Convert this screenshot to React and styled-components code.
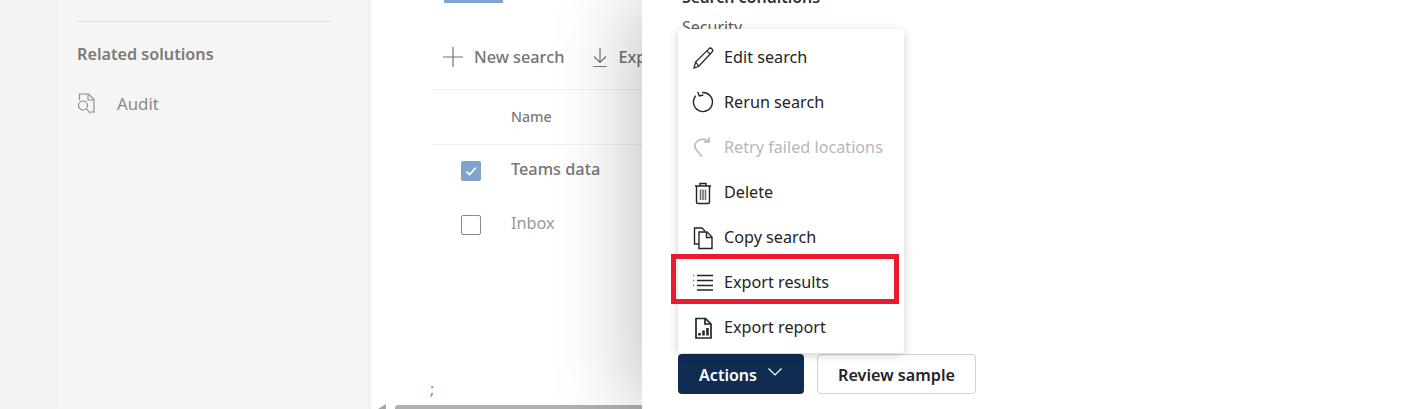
import styled, { createGlobalStyle } from 'styled-components';

const GlobalStyle = createGlobalStyle`
	html, body {
		margin: 0;
		padding: 0;
		background: #ffffff;
	}
	body {
		font-family: 'Noto Sans', 'Open Sans', 'Liberation Sans', sans-serif;
	}
`;

const menuItems = [
	{ label: 'Edit search', icon: 'edit' },
	{ label: 'Rerun search', icon: 'rerun' },
	{ label: 'Retry failed locations', icon: 'retry', disabled: true },
	{ label: 'Delete', icon: 'delete' },
	{ label: 'Copy search', icon: 'copy' },
	{ label: 'Export results', icon: 'list', marked: true },
	{ label: 'Export report', icon: 'report' },
];

const Icon = ({ name }) => {
	const common = { width: 24, height: 24, viewBox: '0 0 24 24', fill: 'none', stroke: 'currentColor', strokeWidth: 1.2 };
	switch (name) {
		case 'edit':
			return (
				<svg {...common}>
					<path d="M3 22l1.600-6L17.800 2.800a2.200 2.200 0 0 1 3.200 3.200L7.800 20.200z" />
					<path d="M15.800 4.800l3.400 3.400M4.600 16l3.200 4.200" />
				</svg>
			);
		case 'rerun':
			return (
				<svg {...common} strokeWidth={1.4}>
					<path d="M11 1.600A9.500 9.500 0 1 1 4.800 4.800" />
					<path d="M6.800 1l1.500 4 4-1" />
				</svg>
			);
		case 'retry':
			return (
				<svg {...common} strokeWidth={1.5}>
					<path d="M17.500 5.500C14.500 2.500 9 2.500 6 5.500C3 8.500 3.500 11.500 5.500 14l5.500 6.500" />
					<path d="M18 1v5h-5" />
				</svg>
			);
		case 'delete':
			return (
				<svg {...common} strokeWidth={1.4}>
					<path d="M4 5h16M9 5V2.500h6V5M5.500 5v16a1.500 1.500 0 0 0 1.500 1.500h10a1.500 1.500 0 0 0 1.500-1.500V5" />
					<path d="M9.500 8.500v10.500M12 8.500v10.500M14.500 8.500v10.500" strokeWidth={1.600} stroke="#6e6e6e" />
				</svg>
			);
		case 'copy':
			return (
				<svg {...common} strokeWidth={1.4}>
					<path d="M8 18H3.500V2H11l3 3" />
					<path d="M8 6h8l5 5v11.500H8z" />
					<path d="M15.500 6v5.500H21" />
				</svg>
			);
		case 'list':
			return (
				<svg {...common} strokeWidth={1.300}>
					<path d="M6 4.500h16M6 9.500h16M6 14.500h16M6 19h16" />
					<path d="M2 4.500h1.300M2 9.500h1.300M2 14.500h1.300" stroke="#777777" />
				</svg>
			);
		case 'report':
			return (
				<svg {...common} strokeWidth={1.700}>
					<path d="M5 2.500h9.500L20 8v14H5z" />
					<path d="M14 2.500V8h5.500" />
					<path d="M8.500 19.500v-2.500M12.500 19.500v-5M16.500 19.500v-7.500" strokeWidth={2.500} />
				</svg>
			);
		default:
			return null;
	}
};

const AuditIcon = () => (
	<svg width="20" height="24" viewBox="0 0 20 24" fill="none" stroke="currentColor" strokeWidth="1.100">
		<path d="M2.500 8V2h9l5.500 5.500V20h-3.500" />
		<path d="M11 2.500V8h6" />
		<circle cx="6" cy="13.500" r="4.500" />
		<path d="M9.500 17l4 4.500" />
	</svg>
);

const App = () => {
	return (
		<>
			<GlobalStyle />
			<Page>
				<Gutter />
				<Sidebar>
					<Divider />
					<SideTitle>Related solutions</SideTitle>
					<SideLink>
						<AuditIcon />
						<span>Audit</span>
					</SideLink>
				</Sidebar>
				<Main>
					<TabMark />
					<CommandBar>
						<CommandButton>
							<svg width="22" height="22" viewBox="0 0 22 22" fill="none" stroke="currentColor" strokeWidth="1.200">
								<path d="M11 1v20M1 11h20" />
							</svg>
							New search
						</CommandButton>
						<CommandButton>
							<svg width="16" height="22" viewBox="0 0 16 22" fill="none" stroke="currentColor" strokeWidth="1.200">
								<path d="M8 2v14M2 10.500l6 6 6-6M1.500 20.500h13" />
							</svg>
							Export
						</CommandButton>
					</CommandBar>
					<HeaderRow>
						<HeaderCell>Name</HeaderCell>
					</HeaderRow>
					<Row>
						<Check $checked>
							<svg width="14" height="14" viewBox="0 0 12 12" fill="none" stroke="#ffffff" strokeWidth="1.500">
								<path d="M2 6.500l2.800 2.500L10 3.200" />
							</svg>
						</Check>
						<RowName $strong>Teams data</RowName>
					</Row>
					<Row>
						<Check />
						<RowName>Inbox</RowName>
					</Row>
					<Semicolon>;</Semicolon>
					<ScrollTrack>
						<ScrollArrow />
						<ScrollThumb />
					</ScrollTrack>
				</Main>
				<Panel>
					<PanelHeading>Search conditions</PanelHeading>
					<PanelText>Security</PanelText>
					<Actions>
						<PrimaryButton>
							Actions
							<svg width="16" height="10" viewBox="0 0 16 10" fill="none" stroke="#ffffff" strokeWidth="1.200">
								<path d="M1.500 1.500L8 8l6.500-6.500" />
							</svg>
						</PrimaryButton>
						<SecondaryButton>Review sample</SecondaryButton>
						<Menu>
							{menuItems.map((item) => (
								<MenuItem key={item.label} $disabled={item.disabled}>
									<Icon name={item.icon} />
									<MenuLabel>{item.label}</MenuLabel>
									{item.marked && <Highlight />}
								</MenuItem>
							))}
						</Menu>
					</Actions>
				</Panel>
			</Page>
		</>
	);
};

const Page = styled.div`
	display: flex;
	width: 1421px;
	height: 409px;
	overflow: hidden;
`;

const Gutter = styled.div`
	width: 58px;
	flex: none;
	background: #f3f3f3;
`;

const Sidebar = styled.div`
	width: 313px;
	flex: none;
	box-sizing: border-box;
	padding: 21px 40px 0 19px;
	background: #f5f5f5;
	box-shadow: inset -4px 0 4px -3px #ececec;
`;

const Divider = styled.div`
	height: 1px;
	width: 254px;
	background: #dcdcdc;
`;

const SideTitle = styled.div`
	margin-top: 20px;
	font-size: 16.2px;
	line-height: 24px;
	font-weight: 600;
	color: #7b7a79;
`;

const SideLink = styled.div`
	display: flex;
	align-items: center;
	gap: 20px;
	margin-top: 26px;
	font-size: 16.8px;
	line-height: 24px;
	color: #8a8988;
`;

const Main = styled.div`
	position: relative;
	width: 271px;
	flex: none;
	box-sizing: border-box;
	padding-left: 61px;
	background: #ffffff;
	overflow: hidden;
`;

const TabMark = styled.div`
	position: absolute;
	left: 73px;
	top: 0;
	width: 59px;
	height: 3px;
	background: #7fa3cc;
`;

const CommandBar = styled.div`
	display: flex;
	align-items: center;
	gap: 28px;
	height: 90px;
	box-sizing: border-box;
	padding: 24px 0 0 10px;
	border-bottom: 1px solid #eeeeee;
	white-space: nowrap;
`;

const CommandButton = styled.div`
	display: flex;
	align-items: center;
	gap: 10px;
	font-size: 16.3px;
	font-weight: 500;
	color: #767574;
`;

const HeaderRow = styled.div`
	display: flex;
	align-items: center;
	height: 54px;
	padding-left: 79px;
	border-bottom: 1px solid #f0f0f0;
`;

const HeaderCell = styled.div`
	margin-bottom: 2px;
	font-size: 14.2px;
	font-weight: 500;
	color: #7b7a79;
`;

const Row = styled.div`
	display: flex;
	align-items: center;
	gap: 30px;
	height: 54px;
	padding-left: 29px;
`;

const Check = styled.div`
	display: flex;
	align-items: center;
	justify-content: center;
	width: 20px;
	height: 20px;
	margin-bottom: 2px;
	box-sizing: border-box;
	border-radius: 2px;
	background: ${(p) => (p.$checked ? '#7fa3cc' : '#ffffff')};
	border: 1px solid ${(p) => (p.$checked ? '#7fa3cc' : '#8a8a8a')};
`;

const RowName = styled.div`
	margin-bottom: 6px;
	font-size: 16.3px;
	font-weight: ${(p) => (p.$strong ? 500 : 400)};
	color: ${(p) => (p.$strong ? '#767574' : '#98979a')};
`;

const Semicolon = styled.div`
	position: absolute;
	left: 59px;
	top: 378px;
	font-size: 16px;
	color: #8a8988;
`;

const ScrollTrack = styled.div`
	position: absolute;
	left: 7px;
	right: 0;
	bottom: 0;
	display: flex;
	align-items: flex-end;
	gap: 9px;
	height: 4px;
`;

const ScrollArrow = styled.div`
	width: 0;
	height: 0;
	border-style: solid;
	border-width: 0 0 5px 8px;
	border-color: transparent transparent #a8a8a8 transparent;
`;

const ScrollThumb = styled.div`
	flex: 1;
	height: 4px;
	background: #b0b0b0;
	border-top-left-radius: 3px;
`;

const Panel = styled.div`
	position: relative;
	flex: 1;
	box-sizing: border-box;
	padding-left: 36px;
	background: #ffffff;
	box-shadow: -14px 0 70px rgba(0, 0, 0, 0.22);
`;

const PanelHeading = styled.div`
	margin-top: -15px;
	padding-left: 4px;
	font-size: 16px;
	line-height: 24px;
	font-weight: 600;
	color: #323130;
`;

const PanelText = styled.div`
	margin-top: 6px;
	padding-left: 4px;
	font-size: 16px;
	line-height: 24px;
	color: #605e5c;
`;

const Actions = styled.div`
	position: relative;
	display: flex;
	gap: 13px;
	margin-top: 315px;
`;

const PrimaryButton = styled.div`
	display: flex;
	align-items: center;
	justify-content: center;
	gap: 10px;
	width: 126px;
	height: 40px;
	box-sizing: border-box;
	padding-top: 2px;
	border-radius: 4px;
	background: #112c53;
	color: #ffffff;
	font-size: 16px;
	font-weight: 600;

	svg {
		margin-top: -6px;
	}
`;

const SecondaryButton = styled.div`
	display: flex;
	align-items: center;
	justify-content: center;
	width: 159px;
	height: 40px;
	box-sizing: border-box;
	padding-top: 2px;
	border: 1px solid #d1d1d1;
	border-radius: 4px;
	background: #ffffff;
	color: #242424;
	font-size: 16.2px;
	font-weight: 600;
`;

const Menu = styled.div`
	position: absolute;
	left: 0;
	bottom: 41px;
	width: 226px;
	box-sizing: border-box;
	padding: 6px 0 3px;
	border-radius: 4px;
	background: #ffffff;
	box-shadow: 0 2px 10px rgba(0, 0, 0, 0.2);
`;

const MenuItem = styled.div`
	position: relative;
	display: flex;
	align-items: center;
	gap: 9px;
	height: 45px;
	padding-left: 13px;
	font-size: 16.2px;
	white-space: nowrap;
	color: ${(p) => (p.$disabled ? '#b8b7b6' : '#242424')};
`;

const MenuLabel = styled.span`
	margin-bottom: 2px;
`;

const Highlight = styled.div`
	position: absolute;
	left: -7px;
	top: -6px;
	width: 228px;
	height: 50px;
	box-sizing: border-box;
	border: 5px solid #e81c2e;
`;

export default App;
